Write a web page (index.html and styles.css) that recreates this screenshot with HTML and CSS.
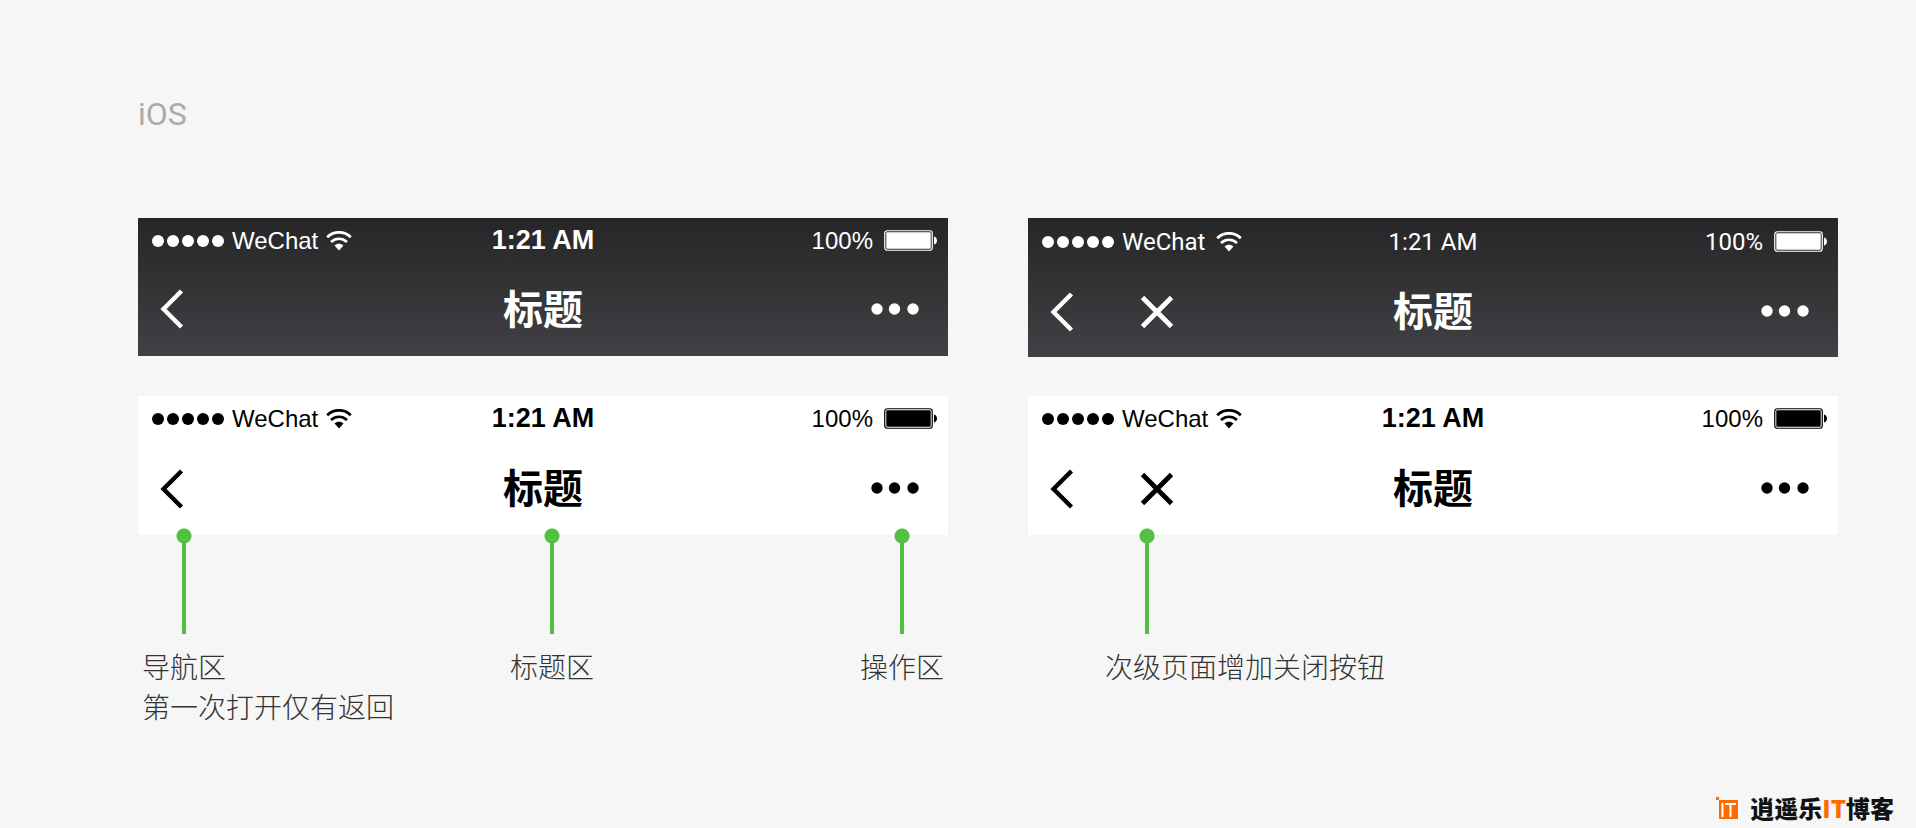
FILE: index.html
```
<!DOCTYPE html>
<html lang="zh-CN">
<head>
  <meta charset="UTF-8">
  <meta name="viewport" content="width=device-width, initial-scale=1.0">
  <title>iOS 导航栏</title>
  <link rel="stylesheet" href="styles.css">
</head>
<body>
  <!-- 共用图标 -->
  <svg class="sprite" aria-hidden="true">
    <symbol id="signal" viewBox="0 0 73 12">
      <circle cx="6" cy="6" r="6"/><circle cx="21" cy="6" r="6"/><circle cx="36" cy="6" r="6"/><circle cx="51" cy="6" r="6"/><circle cx="66" cy="6" r="6"/>
    </symbol>
    <symbol id="wifi" viewBox="0 0 26 20">
      <path d="M1.2 6.2C8 -.3 18 -.3 24.800 6.200" fill="none" stroke="currentColor" stroke-width="2.800"/>
      <path d="M5 11C10 6.800 16 6.800 21 11" fill="none" stroke="currentColor" stroke-width="2.800"/>
      <path d="M8.500 14.500C11 12.200 15 12.200 17.500 14.500L13 19.500Z"/>
    </symbol>
    <symbol id="battery" viewBox="0 0 54 21">
      <rect x=".75" y=".75" width="47.500" height="19.500" rx="2.500" fill="none" stroke="currentColor" stroke-width="1.200"/>
      <rect x="2.300" y="2.300" width="44.400" height="16.400" rx="1"/>
      <path d="M50 6.500C54 7.500 54 13.500 50 14.500Z"/>
    </symbol>
    <symbol id="back" viewBox="0 0 24 40">
      <path d="M21.500 2L3.500 20L21.500 38" fill="none" stroke="currentColor" stroke-width="4.400"/>
    </symbol>
    <symbol id="close" viewBox="0 0 34 34">
      <path d="M2.500 2.500L31.500 31.500M31.500 2.500L2.500 31.500" fill="none" stroke="currentColor" stroke-width="4.800"/>
    </symbol>
    <symbol id="more" viewBox="0 0 48 12">
      <circle cx="6" cy="6" r="5.700"/><circle cx="23.500" cy="6" r="5.700"/><circle cx="42" cy="6" r="5.700"/>
    </symbol>
  </svg>

  <main class="page">
    <h1 class="platform">iOS</h1>

    <div class="columns">
      <section class="column">
        <div class="bar bar-dark bar-short">
          <div class="status">
            <div class="status-left">
              <svg class="signal"><use href="#signal"/></svg>
              <span class="carrier">WeChat</span>
              <svg class="wifi"><use href="#wifi"/></svg>
            </div>
            <span class="time">1:21 AM</span>
            <div class="status-right">
              <span>100%</span>
              <svg class="battery"><use href="#battery"/></svg>
            </div>
          </div>
          <div class="nav">
            <div class="nav-left">
              <button class="icon-btn" aria-label="返回"><svg class="back"><use href="#back"/></svg></button>
            </div>
            <h2 class="title">标题</h2>
            <button class="icon-btn nav-more" aria-label="更多"><svg class="more"><use href="#more"/></svg></button>
          </div>
        </div>

        <div class="bar bar-light">
          <div class="status">
            <div class="status-left">
              <svg class="signal"><use href="#signal"/></svg>
              <span class="carrier">WeChat</span>
              <svg class="wifi"><use href="#wifi"/></svg>
            </div>
            <span class="time">1:21 AM</span>
            <div class="status-right">
              <span>100%</span>
              <svg class="battery"><use href="#battery"/></svg>
            </div>
          </div>
          <div class="nav">
            <div class="nav-left">
              <button class="icon-btn" aria-label="返回"><svg class="back"><use href="#back"/></svg></button>
            </div>
            <h2 class="title">标题</h2>
            <button class="icon-btn nav-more" aria-label="更多"><svg class="more"><use href="#more"/></svg></button>
          </div>
        </div>

        <!-- 区域说明 -->
        <div class="notes notes-three">
          <div class="note">
            <div class="pin"></div>
            <p>导航区<br>第一次打开仅有返回</p>
          </div>
          <div class="note">
            <div class="pin"></div>
            <p>标题区</p>
          </div>
          <div class="note">
            <div class="pin"></div>
            <p>操作区</p>
          </div>
        </div>
      </section>

      <section class="column">
        <div class="bar bar-dark">
          <div class="status status-thin">
            <div class="status-left">
              <svg class="signal"><use href="#signal"/></svg>
              <span class="carrier">WeChat</span>
              <svg class="wifi"><use href="#wifi"/></svg>
            </div>
            <span class="time">1:21 AM</span>
            <div class="status-right">
              <span>100%</span>
              <svg class="battery"><use href="#battery"/></svg>
            </div>
          </div>
          <div class="nav">
            <div class="nav-left">
              <button class="icon-btn" aria-label="返回"><svg class="back"><use href="#back"/></svg></button>
              <button class="icon-btn" aria-label="关闭"><svg class="close"><use href="#close"/></svg></button>
            </div>
            <h2 class="title">标题</h2>
            <button class="icon-btn nav-more" aria-label="更多"><svg class="more"><use href="#more"/></svg></button>
          </div>
        </div>

        <div class="bar bar-light">
          <div class="status">
            <div class="status-left">
              <svg class="signal"><use href="#signal"/></svg>
              <span class="carrier">WeChat</span>
              <svg class="wifi"><use href="#wifi"/></svg>
            </div>
            <span class="time">1:21 AM</span>
            <div class="status-right">
              <span>100%</span>
              <svg class="battery"><use href="#battery"/></svg>
            </div>
          </div>
          <div class="nav">
            <div class="nav-left">
              <button class="icon-btn" aria-label="返回"><svg class="back"><use href="#back"/></svg></button>
              <button class="icon-btn" aria-label="关闭"><svg class="close"><use href="#close"/></svg></button>
            </div>
            <h2 class="title">标题</h2>
            <button class="icon-btn nav-more" aria-label="更多"><svg class="more"><use href="#more"/></svg></button>
          </div>
        </div>

        <div class="notes notes-close">
          <div class="note">
            <div class="pin"></div>
            <p>次级页面增加关闭按钮</p>
          </div>
        </div>
      </section>
    </div>

    <footer class="brand">
      <svg class="brand-mark" viewBox="0 0 23 23">
        <path d="M0 0H3V3H0ZM3 3H22V22H3Z" fill="#ff6a00"/>
        <path d="M6.500 6V20M9 7H20M14.500 6V20" fill="none" stroke="#fff" stroke-width="2"/>
      </svg>
      <span class="brand-name">逍遥乐<em>IT</em>博客</span>
    </footer>
  </main>
</body>
</html>
```

FILE: styles.css
```
* {
  box-sizing: border-box;
}

body {
  margin: 0;
  background: #f6f6f6;
  color: #333;
  font-family: "Liberation Sans", "Noto Sans CJK SC", sans-serif;
}

.sprite {
  display: none;
}

.page {
  display: flex;
  flex-direction: column;
  min-height: 100vh;
  padding: 94px 78px 8px 138px;
}

.platform {
  margin: 0 0 84px;
  color: #aaa;
  font-family: Roboto, "Liberation Sans", sans-serif;
  font-size: 32px;
  font-weight: 400;
  line-height: 40px;
}

.columns {
  display: grid;
  grid-template-columns: 1fr 1fr;
  gap: 80px;
}

/* 导航栏 */
.bar {
  height: 139px;
}

.bar-dark {
  margin-bottom: 39px;
  background: linear-gradient(#262628, #414145);
  color: #fff;
}

.bar-short {
  height: 138px;
  margin-bottom: 40px;
}

.bar-light {
  background: #fff;
  color: #000;
}

.bar svg {
  display: block;
  fill: currentColor;
}

.status {
  display: grid;
  grid-template-columns: 1fr auto 1fr;
  align-items: center;
  height: 45px;
  padding: 0 10px;
  font-size: 24px;
}

.status-left,
.status-right {
  display: flex;
  align-items: center;
}

.status-left {
  gap: 7px;
  padding-left: 4px;
}

.status-right {
  justify-content: flex-end;
  gap: 11px;
}

.carrier {
  width: 87px;
}

.time {
  font-size: 27px;
  font-weight: bold;
}

.status-thin {
  height: 47px;
  font-family: Roboto, "Liberation Sans", sans-serif;
}

.status-thin .time {
  font-size: 24px;
  font-weight: 400;
}

.signal {
  width: 73px;
  height: 12px;
}

.wifi {
  width: 26px;
  height: 20px;
}

.battery {
  width: 54px;
  height: 21px;
}

.nav {
  display: grid;
  grid-template-columns: 1fr auto 1fr;
  align-items: center;
  height: 92px;
  padding: 0 22px;
}

.bar-light .nav {
  height: 93px;
}

.nav-left {
  display: flex;
  align-items: center;
  gap: 66px;
  padding-top: 2px;
}

.bar-short .nav-left {
  padding-top: 0;
}

.icon-btn {
  padding: 0;
  border: none;
  background: none;
  color: inherit;
  cursor: pointer;
}

.nav-more {
  justify-self: end;
  padding-right: 7px;
}

.back {
  width: 24px;
  height: 40px;
}

.close {
  width: 34px;
  height: 34px;
}

.more {
  width: 48px;
  height: 12px;
}

.title {
  margin: 0;
  padding-bottom: 4px;
  font-family: "Noto Sans CJK SC", sans-serif;
  font-size: 40px;
  font-weight: 700;
  line-height: 48px;
}

/* 标注 */
.notes {
  margin-top: -7px;
}

.notes-three {
  display: grid;
  grid-template-columns: 368fr 350fr 84px;
  padding: 0 4px;
}

.notes-close {
  padding-left: 77px;
}

.pin {
  width: 16px;
  height: 106px;
  margin-left: 34px;
  background:
    radial-gradient(circle at 8px 8px, #53bf43 7px, transparent 8px),
    linear-gradient(#53bf43, #53bf43) center bottom / 4px 98px no-repeat;
}

.note p {
  margin: 12px 0 0;
  font-family: "Noto Sans CJK SC", sans-serif;
  font-size: 28px;
  font-weight: 300;
  line-height: 40px;
  white-space: nowrap;
}

/* 页脚标识 */
.brand {
  display: flex;
  align-items: center;
  justify-content: flex-end;
  gap: 11px;
  margin: auto -56px 0 0;
}

.brand-mark {
  width: 23px;
  height: 23px;
}

.brand-name {
  color: #111;
  font-family: "Noto Sans CJK SC", sans-serif;
  font-size: 24px;
  font-weight: 900;
  line-height: 24px;
}

.brand-name em {
  color: #ff6a00;
  font-style: normal;
}
```
